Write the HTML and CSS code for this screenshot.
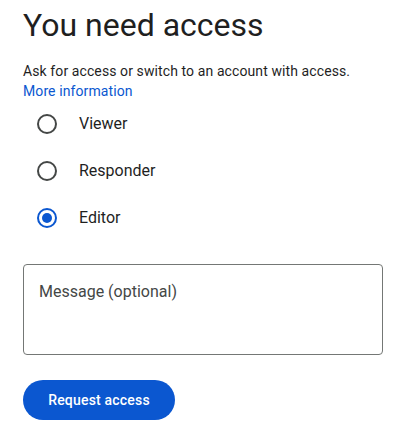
FILE: index.html
```html
<!DOCTYPE html>
<html>
<head>
<meta charset="utf-8">
<link rel="stylesheet" href="styles.css">
</head>
<body>
<main class="page">
  <h1 class="title">You need access</h1>
  <p class="desc">Ask for access or switch to an account with access.<br><a class="link" href="#">More information</a></p>
  <div class="options">
    <label class="option"><span class="radio"></span><span class="label">Viewer</span></label>
    <label class="option"><span class="radio"></span><span class="label">Responder</span></label>
    <label class="option"><span class="radio checked"></span><span class="label">Editor</span></label>
  </div>
  <div class="message"><span class="placeholder">Message (optional)</span></div>
  <button class="btn">Request access</button>
</main>
</body>
</html>
```
FILE: styles.css
```css
html, body { margin: 0; padding: 0; background: #fff; }
body { font-family: Roboto, "Noto Sans", sans-serif; color: #1f1f1f; }
.page { padding: 7px 19px 0 23px; display: flex; flex-direction: column; }
.title { margin: 0; font-size: 32px; font-weight: 400; line-height: 36px; letter-spacing: 0; color: #1f1f1f; }
.desc { margin: 18px 0 0; font-size: 14px; line-height: 20px; letter-spacing: 0.1px; color: #1f1f1f; }
.link { color: #0b57d0; text-decoration: none; }
.options { display: flex; flex-direction: column; margin-top: -1px; padding-left: 14px; }
.option { display: flex; align-items: center; height: 47px; gap: 22px; }
.radio { border: 2px solid #444746; border-radius: 50%; box-sizing: border-box; display: flex; align-items: center; justify-content: center; flex: none; width: 20px; height: 20px; }
.radio.checked { border-color: #0b57d0; }
.radio.checked::after { content: ""; width: 10px; height: 10px; border-radius: 50%; background: #0b57d0; }
.label { font-size: 16px; line-height: 24px; color: #1f1f1f; }
.message { margin-top: 23px; height: 91px; border: 1px solid #747775; border-radius: 4px; box-sizing: border-box; padding: 17px 15px; }
.placeholder { font-size: 16px; line-height: 20px; color: #444746; }
.btn { margin-top: 25px; align-self: flex-start; height: 40px; width: 152px; border: none; border-radius: 20px; background: #0b57d0; color: #fff; font-family: Roboto, sans-serif; font-size: 14px; font-weight: 500; letter-spacing: 0.2px; padding: 0; }
```
